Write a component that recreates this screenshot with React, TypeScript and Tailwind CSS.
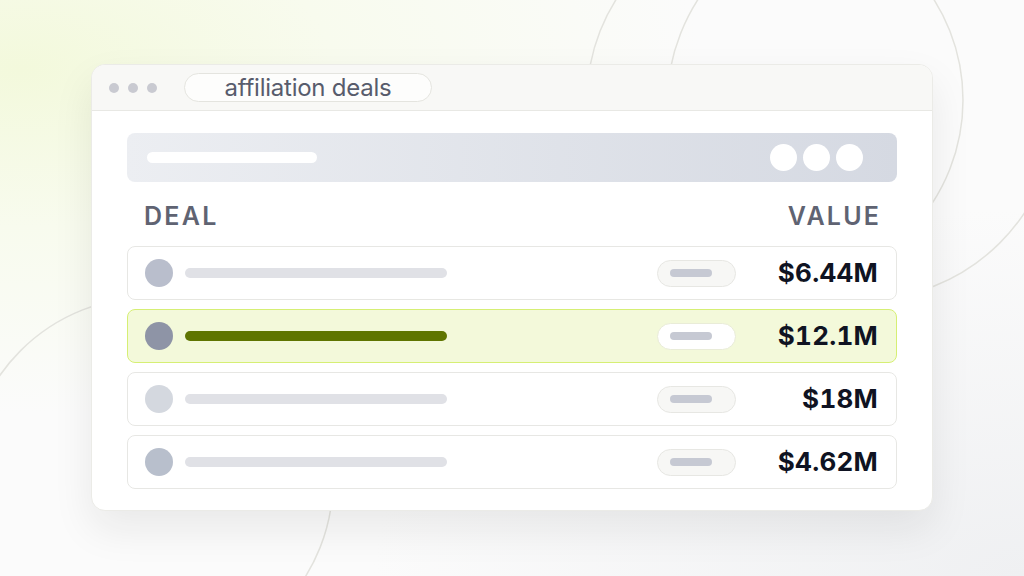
import React from 'react';

type Deal = {
    value: string;
    dot: string;
    active?: boolean;
};

const deals: Deal[] = [
    { value: '$6.44M', dot: 'bg-[#b9becc]' },
    { value: '$12.1M', dot: 'bg-[#8e94a6]', active: true },
    { value: '$18M', dot: 'bg-[#d4d8df]' },
    { value: '$4.62M', dot: 'bg-[#b8bfcc]' },
];

const Backdrop: React.FC = () => (
    <svg className="absolute inset-0 h-full w-full" viewBox="0 0 1024 576" fill="none">
        <circle cx="775" cy="100" r="188" stroke="#e3e3de" strokeWidth="1.5" />
        <circle cx="862" cy="105" r="195" stroke="#e3e3de" strokeWidth="1.5" />
        <circle cx="150" cy="480" r="183" stroke="#e3e3de" strokeWidth="1.5" />
    </svg>
);

const DealRow: React.FC<{ deal: Deal }> = ({ deal }) => (
    <div
        className={`flex h-[54px] items-center rounded-[8px] border pl-[17px] pr-[18px] ${
            deal.active ? 'border-[#d6ef74] bg-[#f3f9da]' : 'border-[#e7e7e4] bg-white'
        }`}
    >
        <div className={`h-[28px] w-[28px] shrink-0 rounded-full ${deal.dot}`} />
        <div
            className={`ml-[12px] h-[10px] w-[262px] rounded-full ${
                deal.active ? 'bg-[#5f7500]' : 'bg-[#e0e1e6]'
            }`}
        />
        <div className="flex-1" />
        <div
            className={`flex h-[27px] w-[79px] items-center rounded-full border pl-[12px] ${
                deal.active ? 'border-[#e9ecd8] bg-white' : 'border-[#e7e7e3] bg-[#f7f7f5]'
            }`}
        >
            <div className="h-[8px] w-[42px] rounded-full bg-[#c6c9d3]" />
        </div>
        <div className="w-[142px] text-right text-[26px] font-bold leading-none tracking-[0.01em] tabular-nums text-[#0f1322]">
            {deal.value}
        </div>
    </div>
);

const App: React.FC = () => {
    return (
        <div
            className="relative h-[576px] w-[1024px] overflow-hidden bg-[#fbfbfb] bg-[radial-gradient(ellipse_at_2%_12%,#f3f9dc_0%,#f8fbee_22%,rgba(251,251,251,0)_48%),radial-gradient(ellipse_at_100%_100%,#eff0f2_0%,rgba(251,251,251,0)_45%)]"
            style={{ fontFamily: 'Inter, "Noto Sans", sans-serif' }}
        >
            <Backdrop />
            <div className="relative pl-[91px] pt-[64px]">
                <div className="w-[842px] overflow-hidden rounded-[14px] border border-[#ebebe7] bg-white shadow-[0_18px_40px_rgba(20,20,30,0.08)]">
                    {/* title bar */}
                    <div className="flex h-[46px] items-center border-b border-[#e8e8e4] bg-[#f8f8f6] pl-[17px]">
                        <div className="flex gap-[9px]">
                            <span className="h-[10px] w-[10px] rounded-full bg-[#c9cad1]" />
                            <span className="h-[10px] w-[10px] rounded-full bg-[#c9cad1]" />
                            <span className="h-[10px] w-[10px] rounded-full bg-[#c9cad1]" />
                        </div>
                        <div className="ml-[27px] flex h-[29px] w-[248px] items-center justify-center rounded-full border border-[#e4e4df] bg-[#fdfdfc] text-[24px] leading-none tracking-[-0.01em] text-[#585c6c]">
                            affiliation deals
                        </div>
                    </div>

                    <div className="px-[35px] pb-[21px] pt-[22px]">
                        {/* toolbar */}
                        <div className="flex h-[49px] items-center rounded-[8px] bg-gradient-to-r from-[#eceef2] to-[#d5d9e2] pl-[20px] pr-[34px]">
                            <div className="h-[11px] w-[170px] rounded-full bg-white" />
                            <div className="flex-1" />
                            <div className="flex gap-[6px]">
                                <span className="h-[27px] w-[27px] rounded-full bg-white" />
                                <span className="h-[27px] w-[27px] rounded-full bg-white" />
                                <span className="h-[27px] w-[27px] rounded-full bg-white" />
                            </div>
                        </div>

                        {/* column heads */}
                        <div className="flex h-[64px] items-center justify-between pl-[17px] pr-[18px] pt-[4px] text-[25px] font-semibold leading-none tracking-[0.09em] text-[#5f6372]">
                            <span>DEAL</span>
                            <span className="-mr-[0.09em]">VALUE</span>
                        </div>

                        <div className="flex flex-col gap-[9px]">
                            {deals.map(deal => (
                                <DealRow key={deal.value} deal={deal} />
                            ))}
                        </div>
                    </div>
                </div>
            </div>
        </div>
    );
};

export default App;
